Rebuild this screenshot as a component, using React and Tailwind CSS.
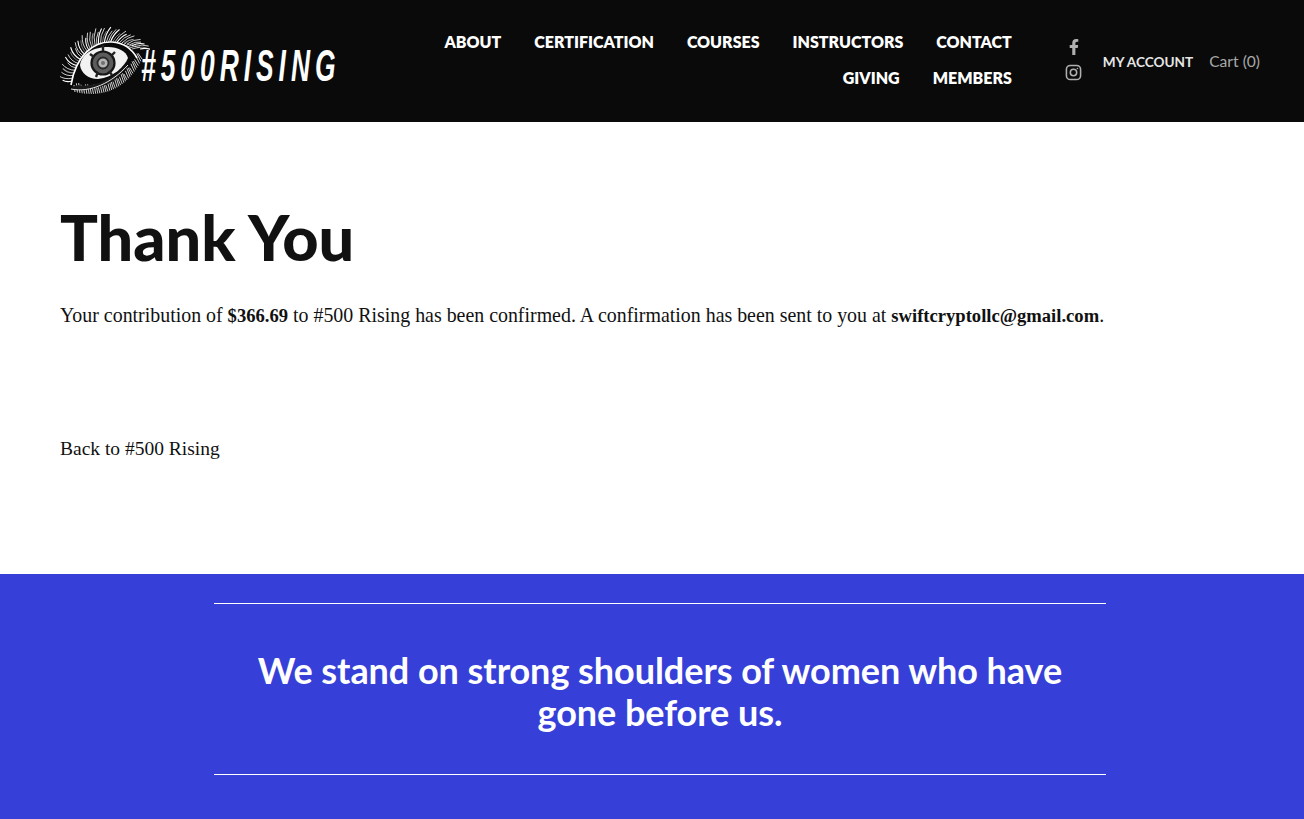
import React from "react";

function bez(p0, p1, p2, t) {
  const u = 1 - t;
  return [u * u * p0[0] + 2 * u * t * p1[0] + t * t * p2[0], u * u * p0[1] + 2 * u * t * p1[1] + t * t * p2[1]];
}

function Eye() {
  const upper = [];
  for (let i = 0; i < 40; i++) {
    const t = i / 39;
    const [x, y] = bez([12, 60], [26, 4], [80, 28], t);
    const a = Math.PI * (1.02 + t * 1.02);
    const len = 11 + 6 * Math.abs(Math.sin(i * 1.9));
    const x2 = x + Math.cos(a) * len * 0.85;
    const y2 = y + Math.sin(a) * len;
    const cx = x + Math.cos(a - 0.35) * len * 0.5;
    const cy = y + Math.sin(a - 0.35) * len * 0.5;
    upper.push(<path key={i} d={`M${x} ${y}Q${cx} ${cy} ${x2} ${y2}`} fill="none" stroke={i % 5 === 3 ? "#999" : "#fff"} strokeWidth={i % 3 === 0 ? 1.1 : 0.8} />);
  }
  const inner = [];
  for (let i = 0; i < 30; i++) {
    const t = i / 29;
    const [x, y] = bez([14, 60], [26, 16], [72, 28], t);
    const [x2, y2] = bez([12, 60], [26, 8], [80, 26], t);
    inner.push(<line key={i} x1={x} y1={y} x2={x2} y2={y2} stroke="#eee" strokeWidth="0.8" />);
  }
  const lower = [];
  for (let i = 0; i < 38; i++) {
    const t = i / 37;
    const [x, y] = bez([14, 69], [58, 80], [78, 38], t);
    const len = 5 + 3 * Math.abs(Math.sin(i * 2.3));
    lower.push(<line key={i} x1={x} y1={y - len} x2={x + 1 + t * 3} y2={y + 2 - t * 2} stroke="#fff" strokeWidth="0.8" />);
  }
  return (
    <svg width="90" height="80" viewBox="0 0 90 80" className="shrink-0">
      {upper}
      {inner}
      <path d="M11 64 C16 34 34 20 52 21 C64 22 72 28 77 37 C72 50 56 66 34 69 C22 71 14 70 11 64Z" fill="#0a0a0a" />
      {lower}
      <path d="M11 64 C16 34 34 20 52 21 C64 22 72 28 77 37" fill="none" stroke="#fff" strokeWidth="1.6" />
      <path d="M20 44 C22 32 34 26 48 26 C58 26 66 30 68 37 C64 46 54 56 38 58 C28 58 21 52 20 44Z" fill="#f2f2f2" />
      <path d="M12 66 C20 62 18 66 30 64 C44 62 60 52 67 42 C62 58 46 66 30 68 C22 70 14 70 12 66Z" fill="#1a1a1a" />
      <circle cx="43" cy="42" r="11.5" fill="#5c5c5c" stroke="#161616" strokeWidth="2.2" />
      <circle cx="43" cy="42" r="5.5" fill="#b5b5b5" stroke="#2a2a2a" strokeWidth="1.8" />
      <circle cx="43" cy="42" r="2" fill="#707070" />
      <path d="M43 24v6M55 31l-4 4M30 33l4 3M36 56l2-5M52 54l-3-4" stroke="#222" strokeWidth="2.4" />
      <path d="M11 68 C30 72 52 62 68 44" fill="none" stroke="#fff" strokeWidth="0.9" />
    </svg>
  );
}

function NavLink({ children }) {
  return <a className="text-[16px] leading-[36px] font-extrabold text-white font-['Lato',sans-serif] whitespace-nowrap">{children}</a>;
}

export default function App() {
  return (
    <div className="min-h-[819px] bg-white flex flex-col overflow-hidden">
      <header className="h-[122px] bg-[#0a0a0a] flex items-center pl-[60px] pr-[44px]">
        <div className="flex items-center w-[278px] shrink-0">
          <Eye />
          <span className="text-white italic font-bold text-[44px] tracking-[8.3px] leading-none mt-[10px] -ml-[9px] whitespace-nowrap font-['Liberation_Sans',sans-serif] [transform:scaleX(0.6)] origin-left">#500RISING</span>
        </div>
        <nav className="flex-1 flex flex-col items-end -mt-[2px]">
          <div className="flex gap-[33px]">
            <NavLink>ABOUT</NavLink>
            <NavLink>CERTIFICATION</NavLink>
            <NavLink>COURSES</NavLink>
            <NavLink>INSTRUCTORS</NavLink>
            <NavLink>CONTACT</NavLink>
          </div>
          <div className="flex gap-[33px]">
            <NavLink>GIVING</NavLink>
            <NavLink>MEMBERS</NavLink>
          </div>
        </nav>
        <div className="flex flex-col items-center gap-[9px] ml-[53px] w-[18px] -mt-[2px] text-[#b0b0b0]">
          <svg width="10" height="16" viewBox="0 0 320 512" fill="currentColor"><path d="M279.14 288l14.22-92.66h-88.91v-60.13c0-25.35 12.42-50.06 52.24-50.06h40.42V6.26S260.43 0 225.36 0c-73.22 0-121.08 44.38-121.08 124.72v70.62H22.89V288h81.39v224h100.17V288z" /></svg>
          <svg width="17" height="17" viewBox="0 0 24 24" fill="none" stroke="currentColor" strokeWidth="2.2"><rect x="2" y="2" width="20" height="20" rx="5.5" /><circle cx="12" cy="12" r="4.5" /><circle cx="17.6" cy="6.4" r="1.1" fill="currentColor" stroke="none" /></svg>
        </div>
        <a className="ml-[20px] mt-[2px] text-[13.6px] font-bold text-[#e6e6e6] font-['Lato',sans-serif] whitespace-nowrap">MY ACCOUNT</a>
        <a className="ml-[16px] mt-[1px] text-[15.6px] text-[#a8a8a8] font-['Lato',sans-serif] whitespace-nowrap">Cart (0)</a>
      </header>

      <main className="h-[452px] px-[60px] pt-[78px]">
        <h1 className="text-[63px] leading-[74px] font-black text-[#111] font-['Lato',sans-serif]">Thank You</h1>
        <p className="mt-[27px] text-[19.9px] leading-[28px] text-[#111] font-['Liberation_Serif',serif]">
          Your contribution of <b className="text-[18.6px]">$366.69</b> to #500 Rising has been confirmed. A confirmation has been sent to you at <b className="text-[18.6px]">swiftcryptollc@gmail.com</b>.
        </p>
        <p className="mt-[105px] text-[19.5px] leading-[28px] text-[#111] font-['Liberation_Serif',serif]">Back to #500 Rising</p>
      </main>

      <footer className="h-[245px] bg-[#3640d9] pt-[29px]">
        <div className="w-[892px] ml-[214px] border-y border-white h-[172px] flex items-center justify-center">
          <h2 className="text-[36px] leading-[42px] font-bold tracking-[-0.05px] text-white text-center w-[840px] mt-[4px] font-['Lato',sans-serif]">We stand on strong shoulders of women who have gone before us.</h2>
        </div>
      </footer>
    </div>
  );
}
